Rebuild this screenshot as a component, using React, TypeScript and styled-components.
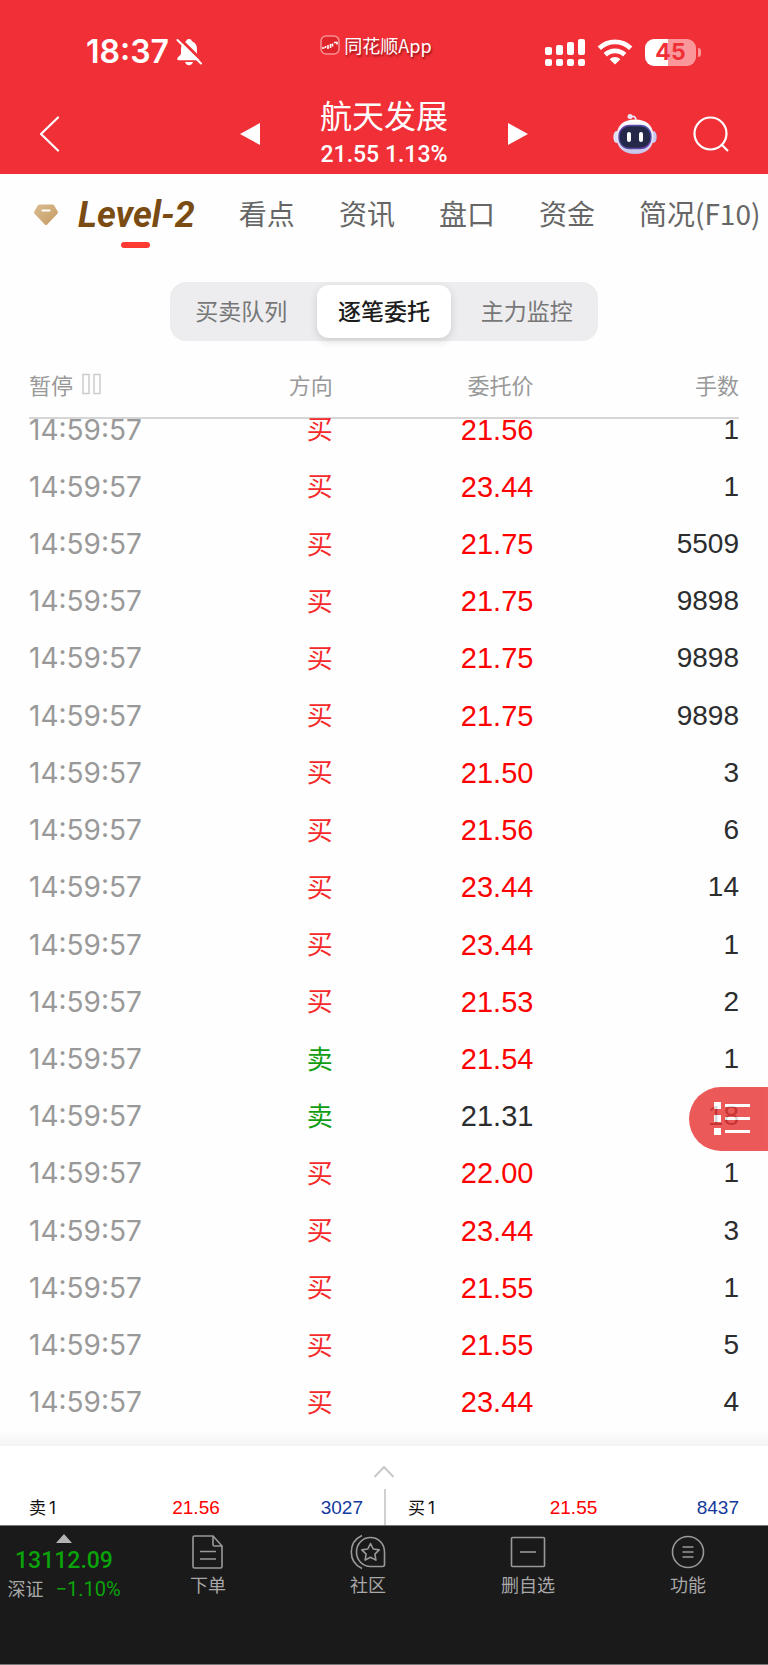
import React from "react";
import styled, { createGlobalStyle } from "styled-components";

const cjk = `"Noto Sans CJK SC", sans-serif`;
const helvetica = `"Liberation Sans", ${cjk}`;
const system = `Inter, ${cjk}`;
const din = `Roboto, ${cjk}`;

const GlobalStyle = createGlobalStyle`
  *, *::before, *::after { box-sizing: border-box; }
  body { margin: 0; background: #fff; }
  button { margin: 0; padding: 0; border: 0; background: none; font: inherit; color: inherit; }
  svg { display: block; }
`;

const Page = styled.div`
  min-height: 100vh;
  display: flex;
  flex-direction: column;
  background: #fefefe;
  color: #2b2d2e;
  font-family: ${system};
`;

/* ---------- header ---------- */

const Header = styled.header`
  background: #f12f37;
  color: #fff;
`;

const StatusBar = styled.div`
  display: grid;
  grid-template-columns: 1fr auto 1fr;
  align-items: center;
  height: 92px;
  padding: 12px 16px 0 0;
`;

const Clock = styled.div`
  display: flex;
  align-items: center;
  gap: 7px;
  padding-left: 86px;
  font-size: 32px;
  line-height: 36px;
  font-weight: 600;
`;

const AppMark = styled.div`
  display: flex;
  align-items: center;
  gap: 4px;
  padding-bottom: 14px;
  font: 18px/24px ${cjk};
  text-shadow: 1px 2px 2px rgba(90, 0, 0, 0.6);
`;

const StatusIcons = styled.div`
  display: flex;
  justify-content: flex-end;
  align-items: center;
  gap: 12px;
  padding-right: 51px;
`;

const NavBar = styled.nav`
  display: grid;
  grid-template-columns: 1fr auto 1fr;
  align-items: center;
  height: 82px;
  padding: 2px 39px 0;
`;

const NavGroup = styled.div<{ $end?: boolean }>`
  display: flex;
  align-items: center;
  justify-content: ${(p) => (p.$end ? "flex-end" : "flex-start")};
  gap: 36px;
`;

const StockSwitch = styled.div`
  display: flex;
  align-items: center;
  gap: 60px;
`;

const StockTitle = styled.h1`
  margin: 0;
  text-align: center;
  font: 32px/34px ${cjk};
`;

const StockQuote = styled.span`
  display: block;
  padding-top: 8px;
  font: 500 23px/32px ${din};
`;

/* ---------- tabs ---------- */

const Tabs = styled.div`
  display: flex;
  align-items: center;
  gap: 44px;
  height: 82px;
  padding-left: 33px;
  overflow: hidden;
  white-space: nowrap;
`;

const Tab = styled.button`
  flex: none;
  padding-bottom: 4px;
  font: 28px/40px ${cjk};
  color: #666;
`;

const LevelTab = styled.button`
  flex: none;
  display: flex;
  align-items: center;
  gap: 19px;
  color: #7a4b12;
  font: italic 700 36px/40px ${din};
`;

const LevelLabel = styled.span`
  position: relative;
  &::after {
    content: "";
    position: absolute;
    left: calc(50% - 15px);
    bottom: -13px;
    width: 29px;
    height: 6px;
    border-radius: 3px;
    background: #ff3a33;
  }
`;

const Segments = styled.div`
  align-self: center;
  display: grid;
  grid-template-columns: repeat(3, 1fr);
  width: 428px;
  height: 59px;
  margin: 26px 0 16px;
  padding: 3px 0;
  border-radius: 16px;
  background: #ededef;
`;

const Segment = styled.button<{ $active?: boolean }>`
  margin: 0 4px;
  padding-bottom: 4px;
  border-radius: 12px;
  font: ${(p) => (p.$active ? 500 : 400)} 23px/40px ${cjk};
  color: ${(p) => (p.$active ? "#1d1d1d" : "#777")};
  ${(p) => p.$active && "background: #fff; box-shadow: 0 3px 8px rgba(0, 0, 0, 0.14);"}
`;

/* ---------- order list ---------- */

const ListArea = styled.main`
  position: relative;
  flex: 1;
  display: flex;
  flex-direction: column;
`;

const Orders = styled.table`
  flex: 1;
  display: flex;
  flex-direction: column;
  padding: 0 29px;
`;

const OrdersHead = styled.thead`
  display: block;
  border-bottom: 2px solid #d6d6d6;
`;

/* The list is scrolled a little, so its first row starts under the heading. */
const OrdersBody = styled.tbody`
  flex: 1;
  display: flex;
  flex-direction: column;
  & > tr:first-child { margin-top: -18px; }
`;

const Row = styled.tr<{ $head?: boolean }>`
  display: grid;
  grid-template-columns: 151fr 152fr 200fr 205fr;
  align-items: center;
  flex: 1 0 57px;
  ${(p) => p.$head && "height: 60px; padding-bottom: 6px;"}
`;

const HeadCell = styled.th`
  padding: 0;
  text-align: right;
  font: 22px/32px ${cjk};
  color: #999;
`;

const PauseButton = styled.button`
  display: flex;
  align-items: center;
  gap: 9px;
`;

const Cell = styled.td`
  padding: 0;
  text-align: right;
  font: 28px/40px ${helvetica};
`;

const TimeCell = styled(Cell)`
  text-align: left;
  white-space: nowrap;
  font: 400 28px/40px ${system};
  color: #999;
`;

const SideCell = styled(Cell)<{ $sell: boolean }>`
  padding-bottom: 3px;
  font: 26px/40px ${cjk};
  color: ${(p) => (p.$sell ? "#0f9d0f" : "#f52a2a")};
`;

const PriceCell = styled(Cell)<{ $flat: boolean }>`
  font-size: 29px;
  color: ${(p) => (p.$flat ? "#2b2d2e" : "#fe0000")};
`;

const FloatingMenu = styled.button`
  position: absolute;
  right: 0;
  bottom: 280px;
  width: 79px;
  height: 64px;
  padding-left: 25px;
  border-radius: 32px 0 0 32px;
  background: #e93636;
  opacity: 0.82;
`;

/* ---------- best quotes ---------- */

const Shade = styled.div`
  height: 15px;
  background: linear-gradient(#fefefe, #f3f3f3);
`;

const QuotePanel = styled.section`
  display: flex;
  flex-direction: column;
  background: #fff;
`;

const Expand = styled.button`
  display: flex;
  justify-content: center;
  align-items: center;
  height: 43px;
  padding-top: 8px;
`;

const Quotes = styled.div`
  display: grid;
  grid-template-columns: 1fr 1fr;
  height: 36px;
`;

const Quote = styled.div<{ $divided?: boolean }>`
  display: grid;
  grid-template-columns: 1fr 1fr 1fr;
  align-items: center;
  padding: ${(p) => (p.$divided ? "2px 29px 0 22px" : "2px 21px 0 29px")};
  ${(p) => p.$divided && "border-left: 2px solid #d0d0d0;"}
  font: 19px/24px ${helvetica};
`;

const QuoteSide = styled.span`
  display: flex;
  gap: 3px;
  font: 17px/24px ${system};
  color: #111;
`;

const QuotePrice = styled.span`
  text-align: center;
  color: #fe0000;
`;

const QuoteVolume = styled.span`
  text-align: right;
  color: #12399c;
`;

/* ---------- bottom bar ---------- */

const BottomBar = styled.footer`
  display: flex;
  height: 140px;
  border-top: 1px solid #777;
  border-bottom: 1px solid #777;
  background: #1a1a1a;
  color: #a8a8a8;
`;

const IndexButton = styled.button`
  width: 128px;
  display: flex;
  flex-direction: column;
  align-items: center;
  align-self: flex-start;
  padding-top: 8px;
`;

const IndexValue = styled.span`
  font: 500 23px/28px ${din};
  color: #0aa30a;
  padding-top: 4px;
`;

const IndexChange = styled.span`
  display: flex;
  gap: 12px;
  font: 18px/26px ${cjk};
  white-space: nowrap;
`;

const IndexPercent = styled.span`
  font: 20px/28px ${din};
  color: #0aa30a;
`;

const Action = styled.button`
  flex: 1;
  display: flex;
  flex-direction: column;
  align-items: center;
  align-self: flex-start;
  padding-top: 8px;
  font: 18px/28px ${cjk};
`;

/* ---------- drawings ---------- */

const BellOff = () => (
  <svg width="26" height="28" viewBox="0 0 26 28" aria-hidden="true">
    <path d="M13 1c-1.600 0-2.600.9-2.900 2.200C6.600 4.400 5 7.200 5 11v4.500c0 1.500-3.500 3.600-3.800 5.300-.1.900.4 1.400 1.400 1.400h20.800c1 0 1.500-.5 1.400-1.400-.3-1.700-3.800-3.800-3.800-5.300V11c0-3.800-1.600-6.600-5.100-7.800C15.600 1.900 14.600 1 13 1z" fill="#fff" />
    <path d="M9 24h8c-.5 1.900-2 3.200-4 3.200S9.500 25.900 9 24z" fill="#fff" />
    <path d="M3.500.5 27 23.500" stroke="#f12f37" strokeWidth="3" />
    <path d="M1.500 2 25 25.500" stroke="#fff" strokeWidth="2" strokeLinecap="round" />
  </svg>
);

const AppLogo = () => (
  <svg width="20" height="20" viewBox="0 0 20 20" aria-hidden="true">
    <rect x="1" y="1" width="18" height="18" rx="5" fill="#e0242b" stroke="#f98f92" strokeWidth="1.500" />
    <path d="M2 13h2.500M5.500 13v-2M8 10v4M10.500 9v4M12.500 8.500v3M14 7.500h3v2" stroke="#fff" strokeWidth="1.600" fill="none" />
  </svg>
);

const Signal = () => (
  <svg width="40" height="28" viewBox="0 0 40 28" fill="#fff" aria-hidden="true">
    {[[0, 9], [11, 7], [22, 4], [33, 1]].map(([x, y]) => (
      <g key={x}>
        <rect x={x} y={y} width="7" height={17 - y} rx="2" />
        <rect x={x} y="21" width="7" height="7" rx="2" />
      </g>
    ))}
  </svg>
);

const Wifi = () => (
  <svg width="36" height="26" viewBox="0 0 36 26" aria-hidden="true">
    <g fill="none" stroke="#fff" strokeWidth="4.800">
      <path d="M2.300 9.200a22.500 22.500 0 0 1 31.400 0" />
      <path d="M8.300 15.700a14 14 0 0 1 19.400 0" />
    </g>
    <path d="M18 25.500l5.400-5.300a7.800 7.800 0 0 0-10.800 0z" fill="#fff" />
  </svg>
);

const BatteryShell = styled.div`
  position: relative;
  width: 51px;
  height: 27px;
  margin-right: 5px;
  border-radius: 9px;
  background: linear-gradient(90deg, #fff 45%, #f9979b 45%);
  color: #f12f37;
  font: 700 23px/27px ${system};
  text-align: center;
  &::after {
    content: "";
    position: absolute;
    right: -5px;
    top: 9px;
    width: 3px;
    height: 9px;
    border-radius: 0 4px 4px 0;
    background: #f9979b;
  }
`;

const BackIcon = () => (
  <svg width="21" height="36" viewBox="0 0 21 36" aria-hidden="true">
    <path d="M19 1.500 2 18l17 16.500" fill="none" stroke="#fff" strokeWidth="2.200" strokeLinecap="round" strokeLinejoin="round" />
  </svg>
);

const Triangle = ({ right }: { right?: boolean }) => (
  <svg width="20" height="22" viewBox="0 0 20 22" aria-hidden="true">
    <path d={right ? "M0 0v22l20-11z" : "M20 0v22L0 11z"} fill="#fff" />
  </svg>
);

const Robot = () => (
  <svg width="44" height="42" viewBox="0 0 44 42" aria-hidden="true">
    <defs>
      <linearGradient id="shell" x1="0" y1="0" x2="0" y2="1">
        <stop offset="0" stopColor="#fff" />
        <stop offset="0.6" stopColor="#e4e4f6" />
        <stop offset="1" stopColor="#c4c2e8" />
      </linearGradient>
      <linearGradient id="rim" x1="0" y1="1" x2="1" y2="0">
        <stop offset="0" stopColor="#4a4f90" />
        <stop offset="0.5" stopColor="#6a3fb6" />
        <stop offset="1" stopColor="#4b5ba6" />
      </linearGradient>
    </defs>
    <circle cx="17" cy="3.500" r="2.500" fill="#e9e6fa" />
    <path d="M17 4c4-1.500 6-.5 6 4" fill="none" stroke="#e9e6fa" strokeWidth="1.600" />
    <ellipse cx="3.500" cy="24" rx="3.200" ry="6" fill="#dcdcf4" />
    <ellipse cx="40.500" cy="24" rx="3.200" ry="6" fill="#c6c6ee" />
    <path d="M22 6.500c12 0 18.500 6.500 18.500 17S34 41 22 41 3.500 34 3.500 23.500 10 6.500 22 6.500z" fill="url(#shell)" />
    <rect x="6" y="12.500" width="32" height="23" rx="10.500" fill="#24294a" stroke="url(#rim)" strokeWidth="1.300" />
    <rect x="14" y="19" width="4" height="10" rx="2" fill="#fff" />
    <rect x="26" y="19" width="4" height="10" rx="2" fill="#fff" />
  </svg>
);

const SearchIcon = () => (
  <svg width="36" height="36" viewBox="0 0 36 36" fill="none" stroke="#fff" strokeWidth="2.200" aria-hidden="true">
    <circle cx="17.500" cy="17.500" r="16" />
    <path d="m28.500 28.500 6.500 6.500" />
  </svg>
);

const Diamond = () => (
  <svg width="26" height="22" viewBox="0 0 26 22" aria-hidden="true">
    <defs>
      <linearGradient id="gem" x1="0" y1="0" x2="1" y2="1">
        <stop offset="0" stopColor="#dbbd91" />
        <stop offset="1" stopColor="#c39a62" />
      </linearGradient>
    </defs>
    <path d="M6.500.5h13q1 0 1.600.8l3.600 6.200q.7 1.200-.3 2.300L14.200 20.500q-1.200 1.200-2.400 0L1.600 9.800q-1-1.100-.3-2.300l3.600-6.200Q5.500.5 6.500.5z" fill="url(#gem)" />
    <path d="M9.500 6.500h7" stroke="#fff" strokeWidth="2.200" strokeLinecap="round" />
  </svg>
);

const PauseIcon = () => (
  <svg width="19" height="22" viewBox="0 0 19 22" fill="none" stroke="#ccc" strokeWidth="1.500" aria-hidden="true">
    <rect x="1" y="1.500" width="6" height="19" />
    <rect x="12" y="1.500" width="6" height="19" />
  </svg>
);

const ListIcon = () => (
  <svg width="36" height="34" viewBox="0 0 36 34" fill="#fff" aria-hidden="true">
    {[0, 13, 26].map((y) => (
      <g key={y}>
        <rect y={y} width="7" height="7" />
        <rect x="11" y={y + 2} width="25" height="3" />
      </g>
    ))}
  </svg>
);

const ChevronUp = () => (
  <svg width="22" height="13" viewBox="0 0 22 13" aria-hidden="true">
    <path d="M1.500 12 11 2l9.500 10" fill="none" stroke="#c9c9c9" strokeWidth="2" />
  </svg>
);

const CaretUp = () => (
  <svg width="16" height="9" viewBox="0 0 16 9" aria-hidden="true">
    <path d="M0 9 8 0l8 9z" fill="#b4b4b4" />
  </svg>
);

const BarIcon = ({ children }: { children: React.ReactNode }) => (
  <svg width="36" height="36" viewBox="0 0 36 36" fill="none" stroke="#999" strokeWidth="1.600" strokeLinejoin="round" aria-hidden="true">
    {children}
  </svg>
);

const OrderIcon = () => (
  <BarIcon>
    <path d="M23 2H4.500Q3 2 3 3.500v29Q3 34 4.500 34h26q1.500 0 1.500-1.500V12z" />
    <path d="M23 2v8.500q0 1.500 1.500 1.500H32M10 17.500h16M10 25h16" />
  </BarIcon>
);

const CommunityIcon = () => (
  <BarIcon>
    <path d="M12 1.500C5.500 4.500 1.300 10.500 1.300 18S5.500 31.500 12 34.500" />
    <path d="M20.500 3.500C12.500 3.500 6.500 10 6.500 18s6 14.500 14 14.500h12q2 0 2-2V18c0-8-6-14.500-14-14.500z" />
    <path d="m20.500 9.500 2.700 5.500 6 .9-4.300 4.200 1 6-5.400-2.800-5.400 2.800 1-6-4.300-4.200 6-.9z" />
  </BarIcon>
);

const RemoveIcon = () => (
  <BarIcon>
    <rect x="1.500" y="3.500" width="33" height="29" rx="1" />
    <path d="M10 18h16" />
  </BarIcon>
);

const FeaturesIcon = () => (
  <BarIcon>
    <circle cx="18" cy="18" r="15.500" />
    <path d="M12.500 13h11M12.500 18h11M12.500 23h11" />
  </BarIcon>
);

/* ---------- data ---------- */

type Order = { side: "买" | "卖"; price: string; lots: number; flat?: boolean };

const orders: Order[] = [
  { side: "买", price: "21.56", lots: 1 },
  { side: "买", price: "23.44", lots: 1 },
  { side: "买", price: "21.75", lots: 5509 },
  { side: "买", price: "21.75", lots: 9898 },
  { side: "买", price: "21.75", lots: 9898 },
  { side: "买", price: "21.75", lots: 9898 },
  { side: "买", price: "21.50", lots: 3 },
  { side: "买", price: "21.56", lots: 6 },
  { side: "买", price: "23.44", lots: 14 },
  { side: "买", price: "23.44", lots: 1 },
  { side: "买", price: "21.53", lots: 2 },
  { side: "卖", price: "21.54", lots: 1 },
  { side: "卖", price: "21.31", lots: 18, flat: true },
  { side: "买", price: "22.00", lots: 1 },
  { side: "买", price: "23.44", lots: 3 },
  { side: "买", price: "21.55", lots: 1 },
  { side: "买", price: "21.55", lots: 5 },
  { side: "买", price: "23.44", lots: 4 },
];

const tabs = ["看点", "资讯", "盘口", "资金", "简况(F10)"];
const segments = ["买卖队列", "逐笔委托", "主力监控"];
const actions = [
  { label: "下单", icon: <OrderIcon /> },
  { label: "社区", icon: <CommunityIcon /> },
  { label: "删自选", icon: <RemoveIcon /> },
  { label: "功能", icon: <FeaturesIcon /> },
];

export default function App() {
  return (
    <Page>
      <GlobalStyle />
      <Header>
        <StatusBar>
          <Clock>18:37<BellOff /></Clock>
          <AppMark><AppLogo />同花顺App</AppMark>
          <StatusIcons>
            <Signal />
            <Wifi />
            <BatteryShell>45</BatteryShell>
          </StatusIcons>
        </StatusBar>
        <NavBar>
          <NavGroup>
            <button aria-label="返回"><BackIcon /></button>
          </NavGroup>
          <StockSwitch>
            <button aria-label="上一只"><Triangle /></button>
            <StockTitle>
              航天发展
              <StockQuote>21.55 1.13%</StockQuote>
            </StockTitle>
            <button aria-label="下一只"><Triangle right /></button>
          </StockSwitch>
          <NavGroup $end>
            <button aria-label="智能助手"><Robot /></button>
            <button aria-label="搜索"><SearchIcon /></button>
          </NavGroup>
        </NavBar>
      </Header>

      <Tabs>
        <LevelTab><Diamond /><LevelLabel>Level-2</LevelLabel></LevelTab>
        {tabs.map((t) => <Tab key={t}>{t}</Tab>)}
      </Tabs>

      <Segments>
        {segments.map((s, i) => <Segment key={s} $active={i === 1}>{s}</Segment>)}
      </Segments>

      <ListArea>
        <Orders>
          <OrdersHead>
            <Row $head>
              <HeadCell><PauseButton>暂停<PauseIcon /></PauseButton></HeadCell>
              <HeadCell>方向</HeadCell>
              <HeadCell>委托价</HeadCell>
              <HeadCell>手数</HeadCell>
            </Row>
          </OrdersHead>
          <OrdersBody>
            {orders.map((o, i) => (
              <Row key={i}>
                <TimeCell>14:59:57</TimeCell>
                <SideCell $sell={o.side === "卖"}>{o.side}</SideCell>
                <PriceCell $flat={!!o.flat}>{o.price}</PriceCell>
                <Cell>{o.lots}</Cell>
              </Row>
            ))}
          </OrdersBody>
        </Orders>
        <FloatingMenu aria-label="目录"><ListIcon /></FloatingMenu>
      </ListArea>

      <Shade />
      <QuotePanel>
        <Expand aria-label="展开"><ChevronUp /></Expand>
        <Quotes>
          <Quote>
            <QuoteSide>卖<span>1</span></QuoteSide>
            <QuotePrice>21.56</QuotePrice>
            <QuoteVolume>3027</QuoteVolume>
          </Quote>
          <Quote $divided>
            <QuoteSide>买<span>1</span></QuoteSide>
            <QuotePrice>21.55</QuotePrice>
            <QuoteVolume>8437</QuoteVolume>
          </Quote>
        </Quotes>
      </QuotePanel>

      <BottomBar>
        <IndexButton>
          <CaretUp />
          <IndexValue>13112.09</IndexValue>
          <IndexChange>深证<IndexPercent>−1.10%</IndexPercent></IndexChange>
        </IndexButton>
        {actions.map((a) => <Action key={a.label}>{a.icon}{a.label}</Action>)}
      </BottomBar>
    </Page>
  );
}
